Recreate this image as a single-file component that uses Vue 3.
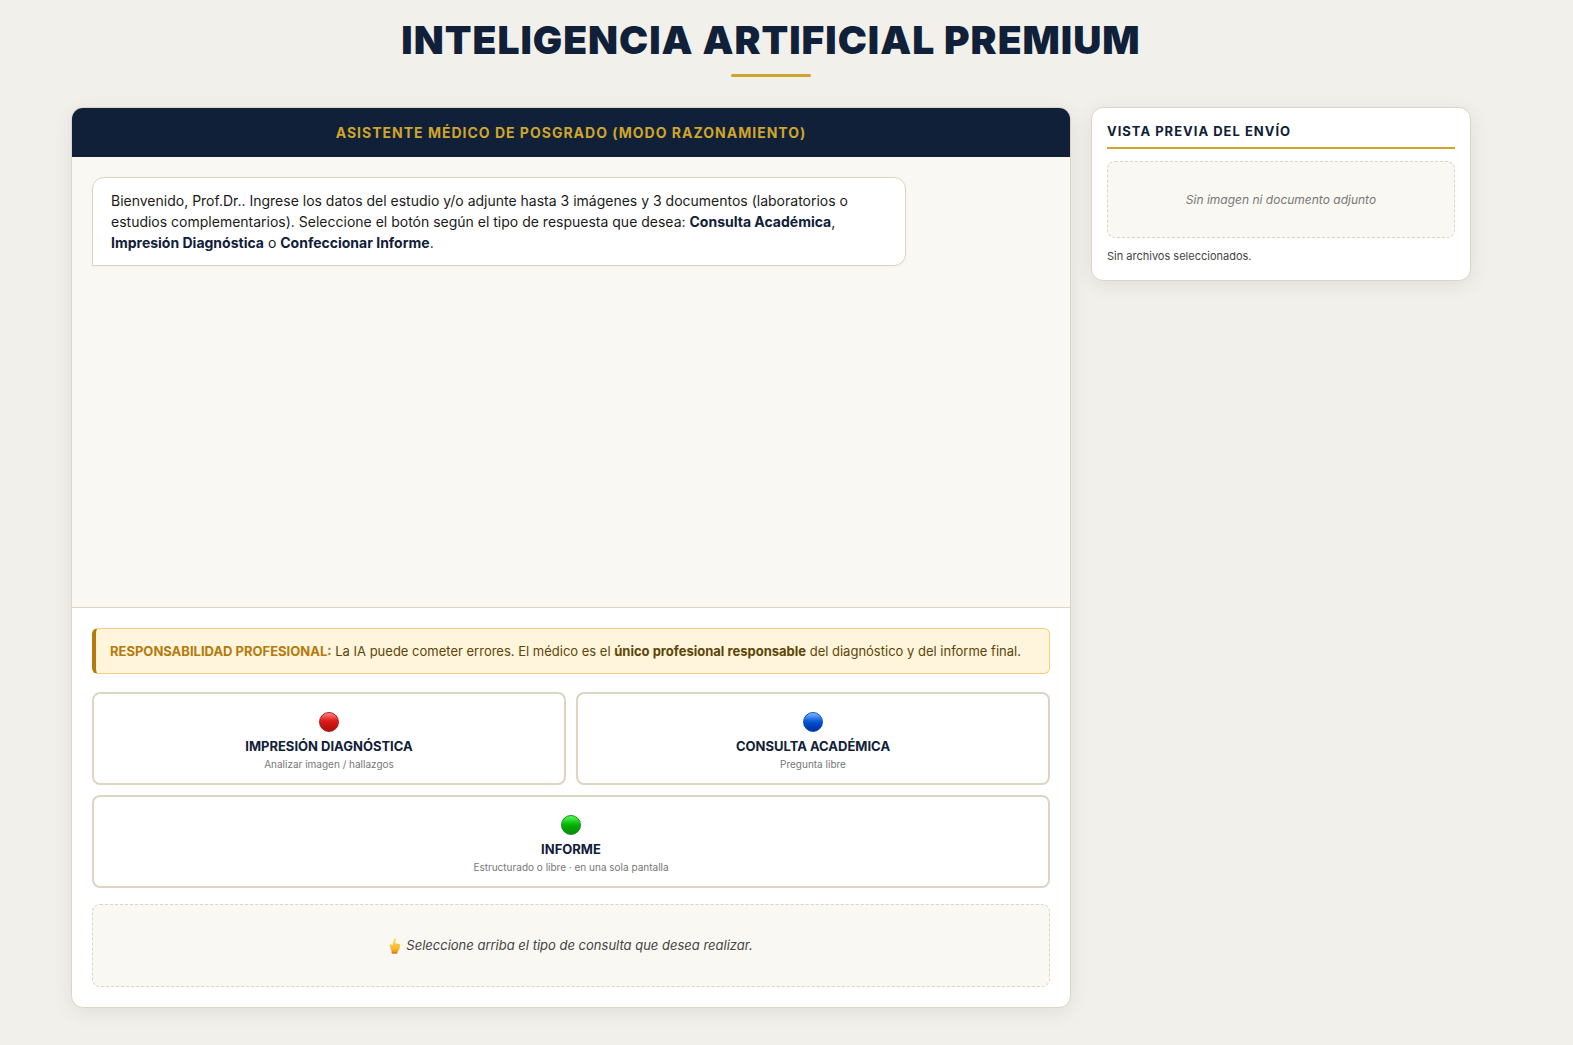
<script setup>
import { ref } from 'vue'

const options = [
  { id: 'impresion', title: 'IMPRESIÓN DIAGNÓSTICA', hint: 'Analizar imagen / hallazgos', color: 'red', wide: false },
  { id: 'consulta', title: 'CONSULTA ACADÉMICA', hint: 'Pregunta libre', color: 'blue', wide: false },
  { id: 'informe', title: 'INFORME', hint: 'Estructurado o libre · en una sola pantalla', color: 'green', wide: true }
]

const selected = ref(null)
</script>

<template>
  <div class="page">
    <header class="page-header">
      <h1>INTELIGENCIA ARTIFICIAL PREMIUM</h1>
    </header>

    <div class="layout">
      <main class="card assistant">
        <h2 class="assistant-title">ASISTENTE MÉDICO DE POSGRADO (MODO RAZONAMIENTO)</h2>

        <section class="chat">
          <p class="bubble">
            Bienvenido, Prof.Dr.. Ingrese los datos del estudio y/o adjunte hasta 3 imágenes y 3 documentos
            (laboratorios o estudios complementarios). Seleccione el botón según el tipo de respuesta que desea:
            <strong>Consulta Académica</strong>, <strong>Impresión Diagnóstica</strong> o
            <strong>Confeccionar Informe</strong>.
          </p>
        </section>

        <section class="controls">
          <p class="warning">
            <strong class="warning-label">RESPONSABILIDAD PROFESIONAL:</strong>
            La IA puede cometer errores. El médico es el
            <strong>único profesional responsable</strong> del diagnóstico y del informe final.
          </p>

          <div class="options">
            <button
              v-for="option in options"
              :key="option.id"
              type="button"
              class="option"
              :class="{ wide: option.wide }"
              :aria-pressed="selected === option.id"
              @click="selected = option.id"
            >
              <span class="option-icon"><span class="dot" :class="option.color"></span></span>
              <span class="option-title">{{ option.title }}</span>
              <span class="option-hint">{{ option.hint }}</span>
            </button>
          </div>

          <p class="prompt">
            <svg class="finger" viewBox="0 0 12 18" aria-hidden="true">
              <defs>
                <linearGradient id="skin" x1="0" y1="0" x2="0" y2="1">
                  <stop offset="0" stop-color="#ffdc6b" />
                  <stop offset="0.6" stop-color="#fbc13a" />
                  <stop offset="1" stop-color="#e08a12" />
                </linearGradient>
              </defs>
              <path
                d="M5.1 1.9Q5.5 1 6.3 1.1Q7.1 1.3 6.9 2.2L6.1 6.6Q7.3 6 8.2 6.8Q9 6.3 9.7 7.1Q11 6.8 11.2 8Q11.3 9.6 10.5 11.7Q9.8 13.3 8.6 14.2L8.3 15.7Q8.1 16.6 7.2 16.6H3.6Q2.6 16.6 2.7 15.6L2.8 14.2Q1.7 12.7 1.3 10.8Q0.6 9.2 0.7 8Q0.9 7 1.9 7.3Q2.8 7.8 3.3 8.7Z"
                fill="url(#skin)"
              />
              <path d="M6 6.7L5.7 9.6M8.2 7L7.8 9.8M9.8 7.4L9.2 10M3.5 8.9L4.6 10.9Q7 10.2 8.5 11.3" fill="none" stroke="#f0ab2c" stroke-width="0.5" />
              <path d="M2.8 14.4Q5.5 15.4 8.4 14.4L8.2 15.9Q8 16.6 7.2 16.6H3.6Q2.6 16.6 2.7 15.6Z" fill="#dd8410" />
            </svg>
            Seleccione arriba el tipo de consulta que desea realizar.
          </p>
        </section>
      </main>

      <aside class="card preview">
        <h2 class="preview-title">VISTA PREVIA DEL ENVÍO</h2>
        <p class="preview-empty">Sin imagen ni documento adjunto</p>
        <p class="preview-files">Sin archivos seleccionados.</p>
      </aside>
    </div>
  </div>
</template>

<style>
body {
  background: #f2f0eb;
}
</style>

<style scoped>
.page {
  box-sizing: border-box;
  padding: 17px 31px 37px 0;
  font-family: Inter, "Liberation Sans", sans-serif;
  color: #1a1a1a;
}

h1,
h2,
p {
  margin: 0;
}

.page-header {
  text-align: center;
  margin-bottom: 30px;
}

.page-header h1 {
  font-size: 39px;
  line-height: 46px;
  font-weight: 900;
  letter-spacing: 1px;
  color: #102038;
}

.page-header::after {
  content: "";
  display: block;
  width: 80px;
  height: 3px;
  margin: 11px auto 0;
  border-radius: 2px;
  background: #d0a52c;
}

.layout {
  display: grid;
  grid-template-columns: minmax(0, 1fr) 380px;
  align-items: start;
  gap: 20px;
  max-width: 1400px;
  margin: 0 auto;
}

.card {
  background: #fff;
  border: 1px solid #ddd5c3;
  border-radius: 12px;
  box-shadow: 0 4px 20px rgba(0, 0, 0, 0.08);
}

.assistant {
  overflow: hidden;
}

.assistant-title {
  padding: 16px;
  background: #102038;
  color: #d0a52c;
  font-size: 14px;
  line-height: 17px;
  font-weight: 700;
  letter-spacing: 1px;
  text-align: center;
}

.chat {
  box-sizing: border-box;
  height: 450px;
  padding: 20px;
  overflow-y: auto;
  background: #faf8f3;
}

.bubble {
  box-sizing: border-box;
  width: 85%;
  padding: 12px 18px;
  background: #fff;
  border: 1px solid #ddd5c3;
  border-radius: 12px 12px 12px 0;
  box-shadow: 0 1px 3px rgba(0, 0, 0, 0.04);
  font-size: 14px;
  line-height: 21px;
}

.bubble strong {
  color: #102038;
}

.controls {
  padding: 20px;
  border-top: 1px solid #ddd5c3;
}

.warning {
  padding: 12px 14px;
  margin-bottom: 18px;
  background: #fff5dc;
  border: 1px solid #f0d080;
  border-left: 4px solid #b47a0c;
  border-radius: 6px;
  color: #5c4508;
  font-size: 13px;
  line-height: 20px;
}

.warning-label {
  color: #b47a0c;
}

.options {
  display: grid;
  grid-template-columns: 1fr 1fr;
  gap: 10px;
  margin-bottom: 16px;
}

.option {
  display: flex;
  flex-direction: column;
  align-items: center;
  gap: 2px;
  padding: 14px 14px 10px;
  background: #fff;
  border: 2px solid #ddd5c3;
  border-radius: 8px;
  font-family: inherit;
  cursor: pointer;
}

.option.wide {
  grid-column: 1 / -1;
}

.option-icon {
  display: flex;
  align-items: center;
  height: 28px;
}

.dot {
  box-sizing: border-box;
  width: 20px;
  height: 20px;
  border-radius: 50%;
}

.dot.red {
  border: 1px solid #b01c1c;
  background: linear-gradient(#ff8a80, #e02020 40%, #d01414 60%, #a81010);
}

.dot.blue {
  border: 1px solid #1450b4;
  background: linear-gradient(#80b8ff, #1464dc 40%, #0048c8 60%, #0030a0);
}

.dot.green {
  border: 1px solid #109018;
  background: linear-gradient(#58ff58, #10c010 40%, #04a404 60%, #0a8c0a);
}

.option-title {
  color: #102038;
  font-size: 13px;
  line-height: 16px;
  font-weight: 700;
}

.option-hint {
  color: #777;
  font-size: 10px;
  line-height: 17px;
}

.prompt {
  display: flex;
  align-items: center;
  justify-content: center;
  gap: 5px;
  padding: 30px;
  background: #faf8f3;
  border: 1px dashed #ddd5c3;
  border-radius: 8px;
  color: #444;
  font-size: 13px;
  line-height: 21px;
  font-style: italic;
}

.finger {
  width: 12px;
  height: 18px;
}

.preview {
  padding: 15px;
}

.preview-title {
  padding-bottom: 8px;
  margin-bottom: 12px;
  border-bottom: 2px solid #d0a52c;
  color: #102038;
  font-size: 13px;
  line-height: 16px;
  font-weight: 700;
  letter-spacing: 1px;
}

.preview-empty {
  padding: 30px;
  margin-bottom: 10px;
  background: #faf8f3;
  border: 1px dashed #ddd5c3;
  border-radius: 8px;
  color: #777;
  font-size: 12px;
  line-height: 15px;
  font-style: italic;
  text-align: center;
}

.preview-files {
  color: #444;
  font-size: 11px;
  line-height: 17px;
}
</style>
